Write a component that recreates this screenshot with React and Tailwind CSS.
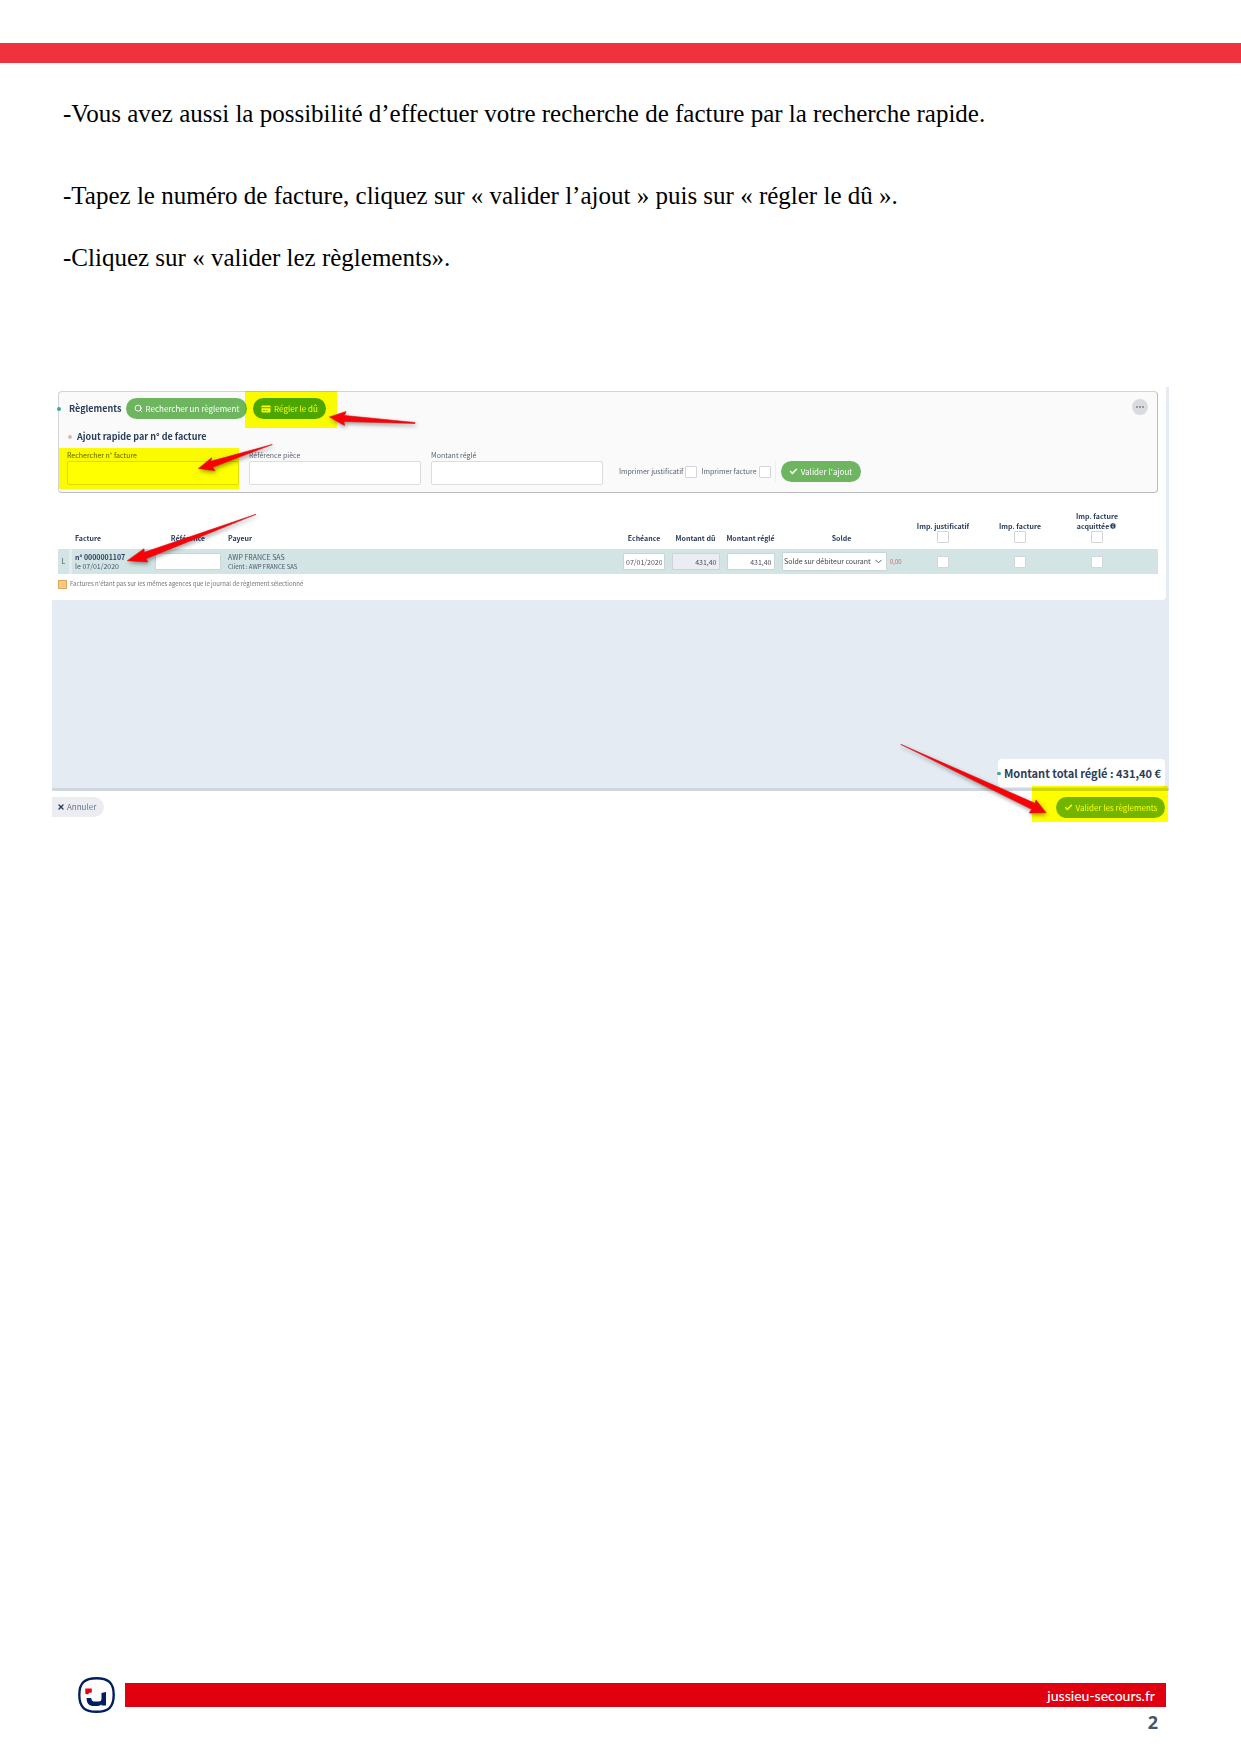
import React, { useState } from "react";
import { Check, ChevronDown, Info, Search, X } from "lucide-react";

function Arrow({ points }) {
  return (
    <polygon
      points={points}
      fill="#fb0007"
      stroke="#d4141a"
      strokeWidth="0.6"
      strokeLinejoin="round"
    />
  );
}

function Highlight({ className }) {
  return (
    <span
      aria-hidden="true"
      className={`pointer-events-none absolute bg-[#ffff00] mix-blend-multiply ${className}`}
    />
  );
}

function CheckBox({ label, checked, onChange }) {
  return (
    <input
      type="checkbox"
      aria-label={label}
      checked={checked}
      onChange={onChange}
      className="block size-3 shrink-0 appearance-none rounded-[1px] border border-[#d3d5d9] bg-white checked:bg-[#6eb55f]"
    />
  );
}

function Field({ id, label }) {
  return (
    <div className="w-[172px]">
      <label htmlFor={id} className="block h-3 text-[7px] leading-3 text-[#5b6473]">
        {label}
      </label>
      <input
        id={id}
        type="text"
        className="block h-6 w-full rounded-[2px] border border-[#dddddf] bg-white px-1 text-[8px]"
      />
    </div>
  );
}

function CardIcon() {
  return (
    <svg viewBox="0 0 20 16" className="h-2 w-[10px]" fill="none" aria-hidden="true">
      <rect x="1" y="1" width="18" height="14" rx="1.5" fill="#fff" />
      <path d="M1 5.5h18" stroke="#4ba634" strokeWidth="2" />
      <path d="M4 11h4M10 11h3" stroke="#4ba634" strokeWidth="1.6" />
    </svg>
  );
}

function Logo() {
  return (
    <svg viewBox="0 0 37 36" className="h-9 w-[37px]" fill="none" aria-hidden="true">
      <path
        d="M18.500 1.300C30 1.300 35.700 5.500 35.700 18S30 34.700 18.500 34.700 1.300 30.500 1.300 18 7 1.300 18.500 1.300Z"
        stroke="#001f5f"
        strokeWidth="2.400"
      />
      <path d="M7.300 11.500h6.500v4l-3 .5-.5 1.500-3-.7z" fill="#e30613" />
      <path
        d="M8.600 21h4.600c.3 2.500 1.300 3.600 3.800 3.600h3c3 0 3.500-1.200 3.500-3.600v-5l4.500-1v13.500h-4.500v-1c-1.500 1.200-3 1.500-5 1.500h-2.500c-5 0-7.400-2.600-7.400-8z"
        fill="#001f5f"
      />
    </svg>
  );
}

function QuickAdd() {
  const [proof, setProof] = useState(false);
  const [invoice, setInvoice] = useState(false);

  return (
    <section className="relative ml-[6px] mr-2 h-[102px] rounded-[4px] border border-[#d3d4d6] border-b-[#bcbcbe] border-r-[#bcbcbe] bg-[#fafafa] pl-2">
      <span className="absolute -left-[2px] top-[15px] size-1 rounded-full bg-[#3aa79b]" />
      <div className="flex items-center pt-[6px]">
        <h1 className="w-[59px] whitespace-nowrap pl-[2px] text-[9px] font-bold">Règlements</h1>
        <button className="flex h-[21px] w-[121px] items-center justify-center gap-[3px] whitespace-nowrap rounded-full bg-[#6eb55f] text-[8px] text-white">
          <Search className="size-[9px]" strokeWidth={2.5} />
          Rechercher un règlement
        </button>
        <button className="ml-[6px] flex h-[21px] w-[73px] items-center justify-center gap-[3px] whitespace-nowrap rounded-full bg-[#4ba634] text-[8px] text-white">
          <CardIcon />
          Régler le dû
        </button>
        <button
          aria-label="Plus d'actions"
          className="mb-1 ml-auto mr-[9px] flex size-4 items-center justify-center gap-[1px] rounded-full bg-[#dadbe0]"
        >
          <span className="size-[2px] rounded-full bg-[#7c8290]" />
          <span className="size-[2px] rounded-full bg-[#7c8290]" />
          <span className="size-[2px] rounded-full bg-[#7c8290]" />
        </button>
      </div>
      <div className="mt-3 flex h-3 items-center gap-[5px] pl-[1px]">
        <span className="size-1 rounded-full bg-[#dfb5b8]" />
        <h2 className="text-[9px] font-bold leading-3">Ajout rapide par n° de facture</h2>
      </div>
      <div className="mt-[6px] flex items-end gap-[10px]">
        <Field id="invoice" label="Rechercher n° facture" />
        <Field id="reference" label="Référence pièce" />
        <Field id="amount" label="Montant réglé" />
        <div className="mb-[3px] ml-[6px] flex h-[21px] items-center whitespace-nowrap text-[7px] text-[#5b6473]">
          <label className="flex items-center gap-[2px]">
            Imprimer justificatif
            <CheckBox checked={proof} onChange={() => setProof(!proof)} />
          </label>
          <label className="ml-1 flex items-center gap-[2px]">
            Imprimer facture
            <CheckBox checked={invoice} onChange={() => setInvoice(!invoice)} />
          </label>
          <span className="ml-1 h-full border-l border-[#eeeeef]" />
          <button className="ml-[5px] flex h-[21px] w-20 items-center justify-center gap-[3px] rounded-full bg-[#6eb55f] text-[8px] text-white">
            <Check className="size-[9px]" strokeWidth={4} />
            Valider l'ajout
          </button>
        </div>
      </div>
      <Highlight className="left-[186px] -top-[1px] h-[37px] w-[92px]" />
      <Highlight className="left-0 top-[56px] h-[41px] w-[180px]" />
    </section>
  );
}

const cellInput =
  "block h-[17px] rounded-[1px] border border-[#c9d5d8] px-[2px] text-[7px] text-[#4b4f58]";

function InvoiceTable() {
  const [all, setAll] = useState([false, false, false]);
  const [row, setRow] = useState([false, false, false]);
  const titles = ["Imp. justificatif", "Imp. facture", "Imp. facture acquittée"];

  const toggle = (list, setList, i) => {
    setList(list.map((value, n) => (n === i ? !value : value)));
  };

  return (
    <div className="ml-[6px] mr-2 mt-[15px]">
      <table className="w-full table-fixed border-collapse text-[7px] leading-[9px]">
        <colgroup>
          <col className="w-[11px]" />
          <col className="w-[3px]" />
          <col className="w-[80px]" />
          <col className="w-[72px]" />
          <col />
          <col className="w-[48px]" />
          <col className="w-[55px]" />
          <col className="w-[55px]" />
          <col className="w-[127px]" />
          <col className="w-[76px]" />
          <col className="w-[78px]" />
          <col className="w-[76px]" />
          <col className="w-[23px]" />
        </colgroup>
        <thead>
          <tr className="h-[41px] whitespace-nowrap align-bottom">
            <td colSpan={2} />
            <th className="pb-[6px] pl-[3px] text-left">Facture</th>
            <th className="pb-[6px]">Référence</th>
            <th className="pb-[6px] pl-1 text-left">Payeur</th>
            <th className="pb-[6px]">Echéance</th>
            <th className="pb-[6px]">Montant dû</th>
            <th className="pb-[6px]">Montant réglé</th>
            <th className="pb-[6px]">Solde</th>
            {titles.map((title, i) => (
              <th key={title} className="pb-[6px]">
                <div className="flex flex-col items-center leading-[10px]">
                  {i === 2 ? (
                    <>
                      <span>Imp. facture</span>
                      <span className="flex items-center">
                        acquittée
                        <Info className="size-2 fill-[#2b3d5b] text-white" strokeWidth={3} />
                      </span>
                    </>
                  ) : (
                    title
                  )}
                  <CheckBox
                    label={`${title} : toutes`}
                    checked={all[i]}
                    onChange={() => toggle(all, setAll, i)}
                  />
                </div>
              </th>
            ))}
            <td />
          </tr>
        </thead>
        <tbody>
          <tr className="h-[25px] bg-[#d2e5e4] text-[#4b5668]">
            <td className="text-center">L</td>
            <td className="bg-[#e6ebef]" />
            <td className="whitespace-nowrap pl-[3px]">
              <div className="font-bold text-[#2b3d5b]">n° 0000001107</div>
              <div>le 07/01/2020</div>
            </td>
            <td>
              <input aria-label="Référence" className={`${cellInput} ml-[3px] w-[66px] bg-white`} />
            </td>
            <td className="whitespace-nowrap pl-1">
              <div>AWP FRANCE SAS</div>
              <div className="text-[6px]">Client : AWP FRANCE SAS</div>
            </td>
            <td>
              <input
                aria-label="Echéance"
                defaultValue="07/01/2020"
                className={`${cellInput} mx-auto w-[42px] bg-white`}
              />
            </td>
            <td>
              <input
                aria-label="Montant dû"
                value="431,40"
                readOnly
                className={`${cellInput} mx-auto w-12 bg-[#ebedf2] text-right`}
              />
            </td>
            <td>
              <input
                aria-label="Montant réglé"
                defaultValue="431,40"
                className={`${cellInput} mx-auto w-12 bg-white text-right`}
              />
            </td>
            <td>
              <div className="flex items-center gap-[3px] whitespace-nowrap pl-1">
                <div className="relative">
                  <select
                    aria-label="Solde"
                    className="block h-[19px] w-[105px] appearance-none rounded-[1px] border border-[#c9d5d8] bg-white pl-[1px] text-[7px] text-[#3f434b]"
                  >
                    <option>Solde sur débiteur courant</option>
                  </select>
                  <ChevronDown className="pointer-events-none absolute right-[3px] top-1 size-[11px]" />
                </div>
                <span className="text-[6px] text-[#c9696b]">0,00</span>
              </div>
            </td>
            {titles.map((title, i) => (
              <td key={title}>
                <div className="flex justify-center">
                  <CheckBox label={title} checked={row[i]} onChange={() => toggle(row, setRow, i)} />
                </div>
              </td>
            ))}
            <td />
          </tr>
        </tbody>
      </table>
      <p className="mt-[5px] flex items-center gap-[3px] whitespace-nowrap text-[6px] leading-[10px] text-[#73757b]">
        <span className="size-[9px] border border-[#dba85f] bg-[#fec77b]" />
        Factures n'étant pas sur les mêmes agences que le journal de règlement sélectionné
      </p>
    </div>
  );
}

function PaymentScreen() {
  return (
    <div className="relative isolate ml-[52px] mr-[72px] bg-white font-['Noto_Sans_CJK_SC','Open_Sans',sans-serif] text-[#2b3d5b]">
      <div className="bg-[#e4ebf3] pr-[3px]">
        <div className="h-[213px] rounded-br-[4px] bg-white pt-1">
          <QuickAdd />
          <InvoiceTable />
        </div>
      </div>
      <div className="flex h-[191px] items-end justify-end border-b-[3px] border-[#d0d7de] bg-[#e4ebf3] pr-1">
        <div className="relative mb-[1px] flex h-7 w-[167px] items-center justify-center whitespace-nowrap rounded-[4px] bg-white pl-[2px] text-[11px] font-bold">
          <span className="absolute -left-[1px] h-[3px] w-1 rounded-full bg-[#3aa79b]" />
          Montant total réglé : 431,40 €
        </div>
      </div>
      <div className="flex h-[31px] items-start justify-between pr-1 pt-[6px] text-[8px]">
        <button className="flex h-5 w-[52px] items-center gap-[2px] rounded-l-[8px] rounded-r-full bg-[#ebedf2] pl-[5px] text-[#69758a]">
          <X className="size-2 text-[#2b3d5b]" strokeWidth={4} />
          Annuler
        </button>
        <button className="flex h-[21px] w-[109px] items-center justify-center gap-[3px] whitespace-nowrap rounded-full bg-[#71b55f] text-white">
          <Check className="size-[9px]" strokeWidth={4} />
          Valider les règlements
        </button>
      </div>
      <Highlight className="bottom-0 right-[1px] h-9 w-[136px]" />
      <svg
        className="pointer-events-none absolute left-0 top-0 h-[200px] w-[380px] overflow-visible drop-shadow-[1px_2px_2px_rgba(0,0,0,0.4)]"
        aria-hidden="true"
      >
        <Arrow points="277.500,30 294,24.500 292.500,28.500 363,35.500 363,36.500 292,34.500 292.500,38.500" />
        <Arrow points="146.500,81.500 159.700,70.700 158.700,74.300 220.300,57.500 160.700,80.300 163,83.700" />
        <Arrow points="75.300,173.700 92,161.700 92.300,165.300 204,127.300 94,171.700 95.700,175" />
      </svg>
      <svg
        className="pointer-events-none absolute bottom-0 right-0 h-[90px] w-[280px] overflow-visible drop-shadow-[1px_2px_2px_rgba(0,0,0,0.4)]"
        aria-hidden="true"
      >
        <Arrow points="157,80.700 147,68 146,71.300 11.700,12.300 142.700,77.300 140.300,81" />
      </svg>
    </div>
  );
}

export default function App() {
  return (
    <div className="flex min-h-screen flex-col bg-white">
      <header className="mt-[43px] h-5 bg-[#f0323f]" />
      <main className="flex-1">
        <div className="mb-[114px] mt-9 pl-[63px] font-['Liberation_Serif',serif] text-[25px] leading-[30px] text-black">
          <p>-Vous avez aussi la possibilité d’effectuer votre recherche de facture par la recherche rapide.</p>
          <p className="mt-[52px]">
            -Tapez le numéro de facture, cliquez sur « valider l’ajout » puis sur « régler le dû ».
          </p>
          <p className="mt-8">-Cliquez sur « valider lez règlements».</p>
        </div>
        <PaymentScreen />
      </main>
      <footer className="pb-6 pl-[78px] pr-[75px]">
        <div className="flex items-center gap-[10px]">
          <Logo />
          <div className="flex h-6 flex-1 items-center justify-end bg-[#e1000f] pr-[11px]">
            <a href="#" className="font-[Lato,sans-serif] text-[14px] font-medium text-white">
              jussieu-secours.fr
            </a>
          </div>
        </div>
        <p className="pr-[8px] text-right font-['Open_Sans',sans-serif] text-[18px] font-bold leading-[18px] text-[#44546a]">
          2
        </p>
      </footer>
    </div>
  );
}
